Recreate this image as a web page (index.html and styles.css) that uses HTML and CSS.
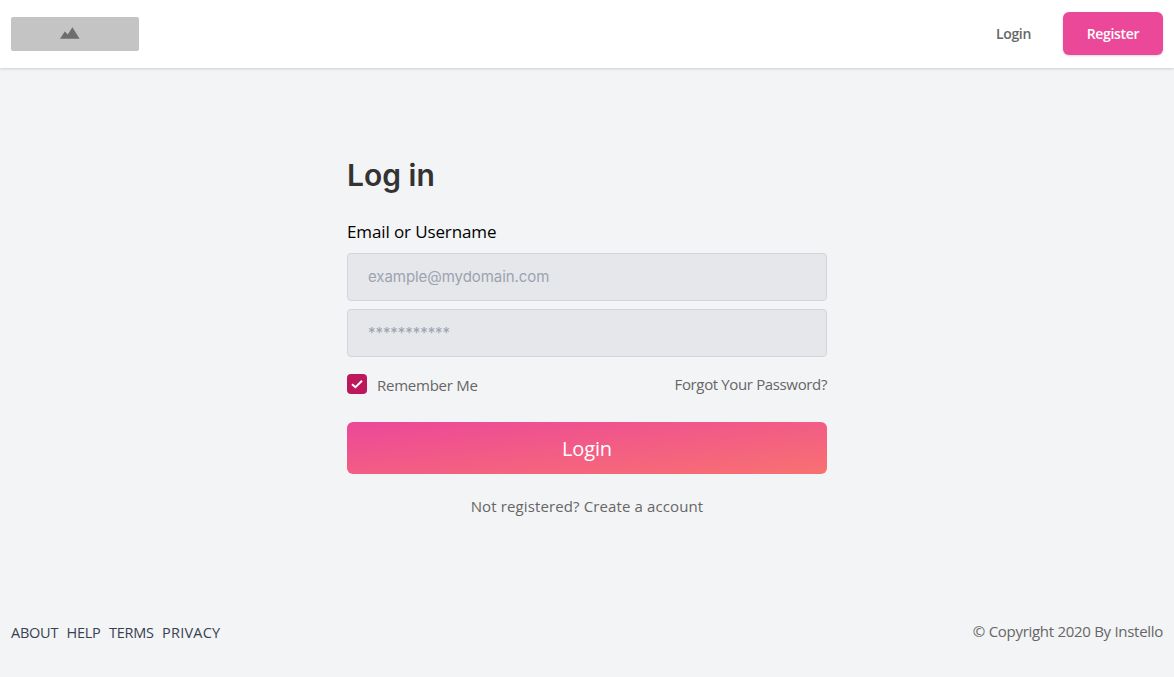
FILE: index.html
```html
<!DOCTYPE html>
<html lang="en">
<head>
<meta charset="utf-8">
<title>Log in</title>
<link rel="stylesheet" href="styles.css">
</head>
<body>
<header class="header">
  <a class="logo" href="#" aria-label="Home"><svg class="logo-mark" viewBox="0 0 20 12"><path d="M0 11.7L4.8 4.5L7.8 7.6L12.4 0.3L19.6 11.7Z"/></svg></a>
  <nav class="nav">
    <a class="nav-login" href="#">Login</a>
    <a class="register" href="#">Register</a>
  </nav>
</header>
<main class="main">
  <form class="form">
    <h1 class="title">Log in</h1>
    <label class="label" for="email">Email or Username</label>
    <input class="input" id="email" type="text" placeholder="example@mydomain.com">
    <input class="input" type="password" placeholder="***********">
    <div class="options">
      <div class="remember"><span class="check"><svg viewBox="0 0 20 20"><path d="M5 10.2L8.4 13.2L15 6.8"/></svg></span><span class="remember-text">Remember Me</span></div>
      <a class="forgot" href="#">Forgot Your Password?</a>
    </div>
    <button class="submit" type="button"><span class="submit-text">Login</span></button>
    <p class="signup"><span class="signup-text">Not registered? Create a account</span></p>
  </form>
</main>
<footer class="footer">
  <nav class="links"><a href="#">ABOUT</a><a href="#">HELP</a><a href="#">TERMS</a><a class="privacy" href="#">PRIVACY</a></nav>
  <p class="copyright">© Copyright 2020 By Instello</p>
</footer>
</body>
</html>
```
FILE: styles.css
```css
* { box-sizing: border-box; margin: 0; }
body {
  min-height: 677px;
  display: flex;
  flex-direction: column;
  background: #f3f4f6;
  color: #666;
  font: 15px/24px "Open Sans", "Noto Sans", sans-serif;
  white-space: nowrap;
}
a { color: inherit; text-decoration: none; }
.header {
  height: 68px;
  padding: 0 11px;
  display: flex;
  align-items: center;
  justify-content: space-between;
  background: #fff;
  box-shadow: 0 1px 3px rgba(0,0,0,.1), 0 1px 2px rgba(0,0,0,.06);
}
.logo { width: 128px; height: 34px; padding: 10px 0 0 49px; border-radius: 2px; background: #c4c4c4; }
.logo-mark { display: block; width: 20px; height: 12px; fill: #6d6d6d; }
.nav { display: flex; align-items: center; gap: 32px; font-size: 14px; font-weight: 600; letter-spacing: -.32px; }
.register {
  width: 100px; height: 43px; line-height: 44px; margin-top: -1px;
  border-radius: 6px; background: #ec4899; color: #fff; text-align: center;
  box-shadow: 0 1px 3px rgba(0,0,0,.1), 0 1px 2px rgba(0,0,0,.06);
}
.main { flex: 1; display: flex; justify-content: center; }
.form { width: 480px; padding-top: 89px; }
.title { font: 600 30px/36px Inter, sans-serif; color: #333; }
.label { display: block; margin-top: 24px; height: 36px; line-height: 29px; font-size: 17px; letter-spacing: -.12px; color: #000; }
.input {
  display: block; width: 100%; height: 48px; padding: 0 20px 2px; margin-bottom: 8px;
  border: 1px solid #d1d5db; border-radius: 4px; background: #e5e7eb;
  font: 15px Inter, sans-serif; letter-spacing: -.06px;
}
.input::placeholder { color: #9ca3af; opacity: 1; }
.options { height: 20px; margin-top: 17px; display: flex; justify-content: space-between; align-items: center; }
.remember { display: flex; align-items: center; gap: 10px; font-weight: 500; letter-spacing: -.24px; }
.remember-text { padding-top: 2px; }
.forgot { letter-spacing: -.36px; }
.check { width: 20px; height: 20px; border-radius: 4px; background: #be185d; }
.check svg { display: block; fill: none; stroke: #fff; stroke-width: 2; }
.submit {
  display: block; width: 100%; height: 52px; margin-top: 28px; border: 0; border-radius: 6px;
  background: linear-gradient(to bottom right, #ec4899, #f87171);
  color: #fff; font: 20px "Open Sans", sans-serif; letter-spacing: -.15px;
}
.signup { margin-top: 20px; text-align: center; letter-spacing: .12px; }
.footer { height: 90px; padding: 0 11px; display: flex; justify-content: space-between; align-items: center; }
.links { display: flex; gap: 8.4px; padding-top: 1px; color: #374151; font-size: 14.5px; letter-spacing: -.25px; }
.privacy { letter-spacing: .2px; }
.copyright { letter-spacing: -.29px; padding-bottom: 2px; }
```
